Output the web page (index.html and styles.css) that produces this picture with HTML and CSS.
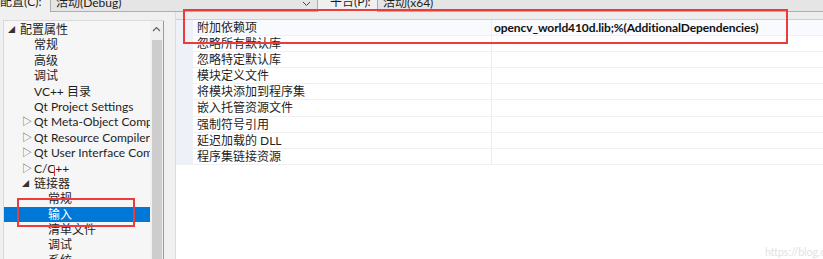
FILE: index.html
```html
<!DOCTYPE html>
<html lang="zh-CN">
<head>
    <meta charset="UTF-8">
    <title>属性页 - 链接器 输入</title>
    <link rel="stylesheet" href="styles.css">
</head>
<body>

<div class="top-bar">
    <span class="top-label">配置(C):</span>
    <div class="combo combo-config">
        <span>活动(Debug)</span>
        <svg class="combo-arrow" width="9" height="6" viewBox="0 0 9 6"><path d="M1 1 L4.5 4.5 L8 1" fill="none" stroke="#444" stroke-width="1"/></svg>
    </div>
    <span class="top-label top-label-platform">平台(P):</span>
    <div class="combo combo-platform">
        <span>活动(x64)</span>
    </div>
</div>

<div class="main">
    <div class="tree-panel">
        <ul class="tree">
            <li class="node depth-0"><span class="arrow open">◢</span>配置属性</li>
            <li class="node depth-1"><span class="arrow"></span>常规</li>
            <li class="node depth-1"><span class="arrow"></span>高级</li>
            <li class="node depth-1"><span class="arrow"></span>调试</li>
            <li class="node depth-1"><span class="arrow"></span>VC++ 目录</li>
            <li class="node depth-1"><span class="arrow"></span>Qt Project Settings</li>
            <li class="node depth-1"><span class="arrow closed">▷</span>Qt Meta-Object Compiler</li>
            <li class="node depth-1"><span class="arrow closed">▷</span>Qt Resource Compiler</li>
            <li class="node depth-1"><span class="arrow closed">▷</span>Qt User Interface Compiler</li>
            <li class="node depth-1"><span class="arrow closed">▷</span>C/C++</li>
            <li class="node depth-1"><span class="arrow open">◢</span>链接器</li>
            <li class="node depth-2"><span class="arrow"></span>常规</li>
            <li class="node depth-2 selected"><span class="arrow"></span>输入</li>
            <li class="node depth-2"><span class="arrow"></span>清单文件</li>
            <li class="node depth-2"><span class="arrow"></span>调试</li>
            <li class="node depth-2"><span class="arrow"></span>系统</li>
        </ul>
        <div class="scrollbar">
            <svg class="scroll-up" width="9" height="6" viewBox="0 0 9 6"><path d="M1 5 L4.5 1.5 L8 5" fill="none" stroke="#606060" stroke-width="1.2"/></svg>
            <div class="scroll-thumb"></div>
        </div>
    </div>

    <div class="grid-panel">
        <div class="grid-header"></div>
        <div class="grid">
            <div class="row first">
                <div class="name">附加依赖项</div>
                <div class="value">opencv_world410d.lib;%(AdditionalDependencies)</div>
            </div>
            <div class="row"><div class="name">忽略所有默认库</div><div class="value"></div></div>
            <div class="row"><div class="name">忽略特定默认库</div><div class="value"></div></div>
            <div class="row"><div class="name">模块定义文件</div><div class="value"></div></div>
            <div class="row"><div class="name">将模块添加到程序集</div><div class="value"></div></div>
            <div class="row"><div class="name">嵌入托管资源文件</div><div class="value"></div></div>
            <div class="row"><div class="name">强制符号引用</div><div class="value"></div></div>
            <div class="row"><div class="name">延迟加载的 DLL</div><div class="value"></div></div>
            <div class="row"><div class="name">程序集链接资源</div><div class="value"></div></div>
        </div>
    </div>
</div>

<!-- annotations drawn over the screenshot -->
<div class="mark mark-value"></div>
<div class="mark mark-input"></div>
<div class="mark-cursor"></div>
<div class="watermark"><span>https://blog.csdn.net</span></div>

</body>
</html>
```

FILE: styles.css
```css
* {
    margin: 0;
    padding: 0;
    box-sizing: border-box;
}

body {
    font-family: Lato, "Noto Sans CJK SC", sans-serif;
    font-size: 12px;
    color: #1e1e1e;
    background-color: #f0f0f0;
    width: 823px;
    height: 259px;
    overflow: hidden;
    position: relative;
}

/* top toolbar, cut by the screenshot */
.top-bar {
    display: flex;
    align-items: stretch;
    height: 20px;
    margin-top: -8px;
    line-height: 19px;
    white-space: nowrap;
    overflow: hidden;
}

.top-label {
    width: 50px;
}

.top-label-platform {
    width: 59px;
    padding-left: 12px;
}

.combo {
    display: flex;
    align-items: center;
    justify-content: space-between;
    background-color: #e5e5e5;
    border: 1px solid #adadad;
    padding: 0 6px 0 5px;
}

.combo-config {
    width: 268px;
}

.combo-platform {
    flex: 1;
    border-right: none;
}

.combo-arrow {
    margin-top: 3px;
}

/* main area */
.main {
    display: flex;
    align-items: flex-start;
    height: 247px;
}

.tree-panel {
    display: flex;
    width: 161px;
    height: 240px;
    margin: 8px 0 0 3px;
    background-color: #f6f6f6;
    border-top: 1px solid #dadada;
    border-left: 1px solid #dadada;
    overflow: hidden;
}

.tree {
    list-style: none;
    flex: 1;
    padding-top: 1px;
    white-space: nowrap;
    overflow: hidden;
}

.node {
    display: flex;
    align-items: center;
    height: 15.4px;
    line-height: 15.4px;
}

.depth-0 { padding-left: 4px; }
.depth-1 { padding-left: 18px; }
.depth-2 { padding-left: 18px; }
.depth-2 .arrow { width: 26px; }

.arrow {
    display: inline-block;
    width: 12px;
    flex-shrink: 0;
    font-size: 8px;
    color: #1e1e1e;
}

.arrow.open {
    font-size: 7px;
    color: #333;
}

.arrow.closed {
    font-size: 10px;
    color: #555;
}

.selected {
    background-color: #0078d7;
    color: #ffffff;
}

.scrollbar {
    width: 14px;
    flex-shrink: 0;
    background-color: #f0f0f0;
    border-right: 1px solid #9a9a9a;
    display: flex;
    flex-direction: column;
    align-items: center;
    padding-top: 5px;
}

.scroll-up {
    margin-bottom: 8px;
}

.scroll-thumb {
    width: 10px;
    flex: 1;
    background-color: #cdcdcd;
}

/* property grid */
.grid-panel {
    flex: 1;
    margin-left: 11px;
    height: 247px;
    border-left: 1px solid #dcdcdc;
    display: flex;
    flex-direction: column;
}

.grid-header {
    height: 8px;
    background-color: #ededed;
    border-bottom: 1px solid #cfcfcf;
}

.grid {
    background-color: #ffffff;
}

.row {
    display: flex;
    height: 16.1px;
    line-height: 15px;
    border-bottom: 1px solid #f0f0f0;
}

.name {
    width: 315px;
    border-left: 17px solid #eef2f8;
    padding-left: 4px;
}

.value {
    flex: 1;
    padding-left: 2px;
    border-left: 1px solid #ededed;
    font-weight: bold;
    font-size: 12px;
    letter-spacing: -0.1px;
    color: #111;
}

.row.first {
    background-color: #f9fafd;
}

.grid-panel::after {
    content: "";
    flex: 1;
    background-color: #ffffff;
}

/* red annotation boxes */
.mark {
    position: absolute;
    border: 2px solid #ec3b3b;
}

.mark-value {
    left: 183px;
    top: 9px;
    width: 605px;
    height: 35px;
}

.mark-input {
    left: 17px;
    top: 198px;
    width: 118px;
    height: 29px;
}

.mark-cursor {
    position: absolute;
    left: 54px;
    top: 167px;
    width: 1px;
    height: 9px;
    background-color: #e03030;
}

.watermark {
    position: absolute;
    left: 765px;
    top: 246px;
    width: 58px;
    overflow: hidden;
    white-space: nowrap;
    font-size: 10.5px;
    color: #e2e2e2;
}
```
